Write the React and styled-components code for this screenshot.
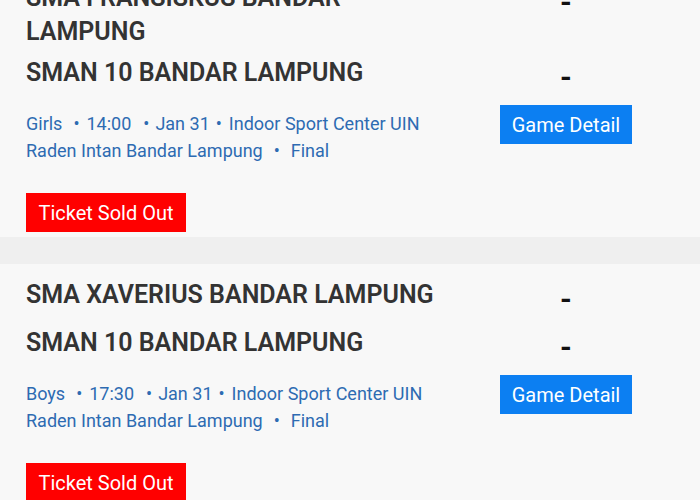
import React from "react";
import styled, { createGlobalStyle } from "styled-components";

const GlobalStyle = createGlobalStyle`
  html, body {
    margin: 0;
    padding: 0;
    background: #efefef;
    font-family: Roboto, "Liberation Sans", sans-serif;
  }
`;

const games = [
  {
    id: 1,
    home: "SMA FRANSISKUS BANDAR LAMPUNG",
    away: "SMAN 10 BANDAR LAMPUNG",
    category: "Girls",
    time: "14:00",
    date: "Jan 31",
    venue: "Indoor Sport Center UIN Raden Intan Bandar Lampung",
    round: "Final",
  },
  {
    id: 2,
    home: "SMA XAVERIUS BANDAR LAMPUNG",
    away: "SMAN 10 BANDAR LAMPUNG",
    category: "Boys",
    time: "17:30",
    date: "Jan 31",
    venue: "Indoor Sport Center UIN Raden Intan Bandar Lampung",
    round: "Final",
  },
];

// list is already scrolled a little, first card starts above the fold
const Schedule = styled.div`
  display: flex;
  flex-direction: column;
  gap: 27px;
  margin-top: -33px;
`;

const Card = styled.div`
  background: #f8f8f8;
  padding: 14px 26px 5px;
`;

const Row = styled.div`
  display: grid;
  grid-template-columns: 2fr 1fr;
  align-items: start;
  margin-bottom: ${(p) => p.$gap || 0}px;
`;

const Team = styled.div`
  font-size: 25px;
  line-height: 34px;
  font-weight: 600;
  color: #333333;
`;

const Score = styled.div`
  font-size: 30px;
  line-height: 41px;
  font-weight: 700;
  color: #111111;
  text-align: center;
`;

const Info = styled.div`
  margin-top: 6px;
  font-size: 18px;
  line-height: 27px;
  color: #2d6bb2;
`;

const Dot = styled.span`
  margin-left: ${(p) => p.$l}px;
  margin-right: ${(p) => p.$r}px;
`;

const DetailButton = styled.button`
  justify-self: center;
  margin-top: 1px;
  width: 132px;
  height: 39px;
  border: none;
  background: #0c7ff2;
  color: #fff;
  font-family: inherit;
  font-size: 20px;
  cursor: pointer;
`;

const SoldOut = styled.div`
  display: inline-flex;
  align-items: center;
  justify-content: center;
  margin-top: 29px;
  width: 160px;
  height: 39px;
  background: #ff0000;
  color: #fff;
  font-size: 20px;
`;

const GameCard = ({ game }) => (
  <Card>
    <Row $gap={7}>
      <Team>{game.home}</Team>
      <Score>-</Score>
    </Row>
    <Row $gap={7}>
      <Team>{game.away}</Team>
      <Score>-</Score>
    </Row>
    <Row>
      <Info>
        {game.category}
        <Dot $l={11} $r={7}>•</Dot>
        {game.time}
        <Dot $l={12} $r={6}>•</Dot>
        {game.date}
        <Dot $l={6} $r={7}>•</Dot>
        {game.venue}
        <Dot $l={11} $r={11}>•</Dot>
        {game.round}
      </Info>
      <DetailButton>Game Detail</DetailButton>
    </Row>
    <SoldOut>Ticket Sold Out</SoldOut>
  </Card>
);

const App = () => (
  <>
    <GlobalStyle />
    <Schedule>
      {games.map((game) => (
        <GameCard key={game.id} game={game} />
      ))}
    </Schedule>
  </>
);

export default App;
